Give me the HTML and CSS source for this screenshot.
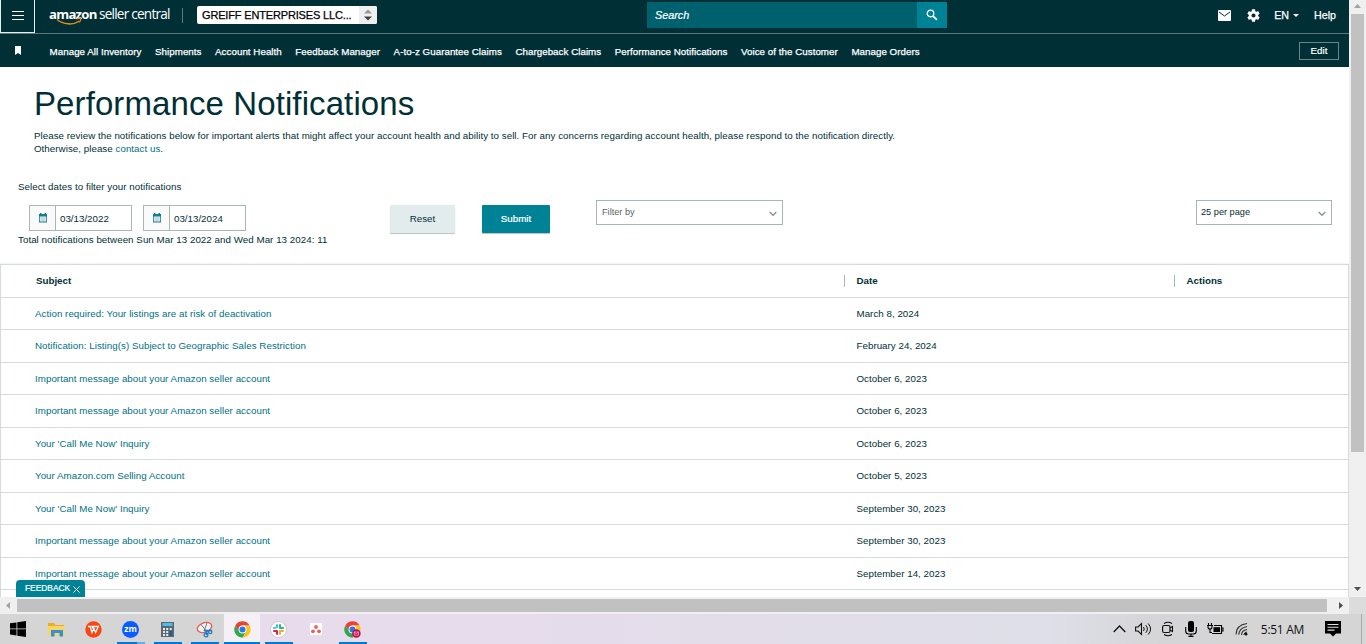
FILE: index.html
```html
<!DOCTYPE html>
<html lang="en">
<head>
<meta charset="utf-8">
<title>Performance Notifications</title>
<link rel="stylesheet" href="styles.css">
</head>
<body>
<div class="screen">
  <div class="browser">
    <div class="page">
      <header class="topbar">
        <div class="burger"><svg width="12" height="11" viewBox="0 0 12 11"><path d="M0 1.500h12M0 5.500h12M0 9.500h12" stroke="#fff" stroke-width="1.100"/></svg></div>
        <div class="brand"><b>amazon</b><span>seller central</span>
          <svg class="smile" width="28" height="8" viewBox="0 0 28 8"><path d="M1 1.500c6 5 16 6 22.500 1.500" fill="none" stroke="#e88b1e" stroke-width="1.500"/><path d="M20.500 1c2-.8 4-.8 4.200-.2.200.8-.5 2.600-1.400 3.700" fill="none" stroke="#e88b1e" stroke-width="1.100"/></svg>
        </div>
        <i class="divider"></i>
        <div class="account"><span>GREIFF ENTERPRISES LLC...</span><i><svg width="8" height="12" viewBox="0 0 8 12"><path d="M0 4.500L4 0.500l4 4z" fill="#999"/><path d="M0 7.500h8l-4 4z" fill="#444"/></svg></i></div>
        <div class="search"><span>Search</span><i><svg width="12" height="12" viewBox="0 0 12 12"><circle cx="4.500" cy="4.500" r="3.300" fill="none" stroke="#fff" stroke-width="1.300"/><path d="M6.900 6.900l4 4" stroke="#fff" stroke-width="1.700"/></svg></i></div>
        <div class="tools">
          <svg class="mail" width="13" height="11" viewBox="0 0 13 11"><rect width="13" height="11" rx="1" fill="#fff"/><path d="M1 2l5.500 4L12 2" fill="none" stroke="#002f36" stroke-width="1"/></svg>
          <svg class="gear" width="13" height="13" viewBox="2 2 20 20"><path fill="#fff" d="M19.140 12.940c.04-.3.060-.61.060-.94 0-.32-.02-.64-.07-.94l2.030-1.580c.18-.14.230-.41.120-.61l-1.920-3.320c-.12-.22-.37-.29-.59-.22l-2.390.96c-.5-.38-1.030-.7-1.620-.94L14.400 2.810c-.04-.24-.24-.41-.48-.41h-3.840c-.24 0-.43.170-.47.410L9.250 5.350c-.59.240-1.130.57-1.620.940l-2.390-.96c-.22-.08-.47 0-.59.220L2.740 8.870c-.12.210-.08.470.120.610l2.030 1.580c-.05.300-.09.630-.09.940s.02.640.070.940l-2.030 1.580c-.18.140-.23.410-.12.610l1.920 3.320c.12.220.37.290.59.220l2.390-.96c.5.380 1.030.7 1.620.940l.36 2.540c.05.240.24.410.48.410h3.840c.24 0 .44-.17.470-.41l.36-2.540c.59-.24 1.130-.56 1.620-.94l2.390.96c.22.080.47 0 .59-.22l1.920-3.320c.12-.22.070-.47-.12-.61zM12 15.200a3.200 3.200 0 110-6.400 3.200 3.200 0 010 6.400z"/></svg>
          <span class="lang">EN</span><svg class="caret" width="6" height="3" viewBox="0 0 6 3"><path d="M0 0h6L3 3z" fill="#fff"/></svg>
          <span>Help</span>
        </div>
      </header>
      <nav class="favorites">
        <svg class="mark" width="6" height="9" viewBox="0 0 6 9"><path d="M0 0h6v9L3 7 0 9z" fill="#fff"/></svg>
        <a>Manage All Inventory</a><a>Shipments</a><a>Account Health</a><a>Feedback Manager</a><a>A-to-z Guarantee Claims</a><a>Chargeback Claims</a><a>Performance Notifications</a><a>Voice of the Customer</a><a>Manage Orders</a>
        <button class="edit">Edit</button>
      </nav>
      <main>
        <h1>Performance Notifications</h1>
        <p class="intro">Please review the notifications below for important alerts that might affect your account health and ability to sell. For any concerns regarding account health, please respond to the notification directly.<br>Otherwise, please <a>contact us</a>.</p>
        <p class="prompt">Select dates to filter your notifications</p>
        <div class="filters">
          <div class="date"><i><svg width="10" height="10" viewBox="0 0 10 10"><path d="M1 1h8v8.500H1zM2 0h1.500v2H2zM6.500 0H8v2H6.500z" fill="#117f92"/><path d="M1.800 3.500h6.400v5H1.800z" fill="#e5edf0"/><path d="M2.500 5h5M2.500 7h5" stroke="#9bb5bd" stroke-width=".7"/></svg></i><span>03/13/2022</span></div>
          <div class="date"><i><svg width="10" height="10" viewBox="0 0 10 10"><path d="M1 1h8v8.500H1zM2 0h1.500v2H2zM6.500 0H8v2H6.500z" fill="#117f92"/><path d="M1.800 3.500h6.400v5H1.800z" fill="#e5edf0"/><path d="M2.500 5h5M2.500 7h5" stroke="#9bb5bd" stroke-width=".7"/></svg></i><span>03/13/2024</span></div>
          <button class="btn reset">Reset</button>
          <button class="btn submit">Submit</button>
          <div class="select by"><span>Filter by</span><svg width="8" height="6" viewBox="0 0 8 6"><path d="M.7 1L4 4.300 7.300 1" fill="none" stroke="#879596" stroke-width="1.500"/></svg></div>
          <div class="select per"><span>25 per page</span><svg width="8" height="6" viewBox="0 0 8 6"><path d="M.7 1L4 4.300 7.300 1" fill="none" stroke="#879596" stroke-width="1.500"/></svg></div>
        </div>
        <p class="total">Total notifications between Sun Mar 13 2022 and Wed Mar 13 2024: 11</p>
        <div class="table">
          <div class="row head"><b>Subject</b><b>Date</b><b>Actions</b></div>
          <div class="row"><a>Action required: Your listings are at risk of deactivation</a><span>March 8, 2024</span></div>
          <div class="row"><a>Notification: Listing(s) Subject to Geographic Sales Restriction</a><span>February 24, 2024</span></div>
          <div class="row"><a>Important message about your Amazon seller account</a><span>October 6, 2023</span></div>
          <div class="row"><a>Important message about your Amazon seller account</a><span>October 6, 2023</span></div>
          <div class="row"><a>Your 'Call Me Now' Inquiry</a><span>October 6, 2023</span></div>
          <div class="row"><a>Your Amazon.com Selling Account</a><span>October 5, 2023</span></div>
          <div class="row"><a>Your 'Call Me Now' Inquiry</a><span>September 30, 2023</span></div>
          <div class="row"><a>Important message about your Amazon seller account</a><span>September 30, 2023</span></div>
          <div class="row"><a>Important message about your Amazon seller account</a><span>September 14, 2023</span></div>
          <div class="row"></div>
        </div>
      </main>
      <div class="feedback"><span>FEEDBACK</span><svg width="7" height="7" viewBox="0 0 7 7"><path d="M.5.5l6 6M6.500.5l-6 6" stroke="#fff"/></svg></div>
    </div>
    <div class="vscroll">
      <svg width="7" height="4" viewBox="0 0 7 4"><path d="M0 4h7L3.500 0z" fill="#a3a3a3"/></svg>
      <i></i>
      <svg width="7" height="4" viewBox="0 0 7 4"><path d="M0 0h7L3.500 4z" fill="#505050"/></svg>
    </div>
    <div class="hscroll">
      <svg width="4" height="7" viewBox="0 0 4 7"><path d="M4 0v7L0 3.500z" fill="#a3a3a3"/></svg>
      <i></i>
      <svg width="4" height="7" viewBox="0 0 4 7"><path d="M0 0v7l4-3.500z" fill="#505050"/></svg>
    </div>
    <div class="corner"></div>
  </div>
  <footer class="taskbar">
    <div class="app start"><svg width="16" height="16" viewBox="0 0 16 16"><path d="M0 2.300l6.500-.9v6.100H0zM7.300 1.300L16 0v7.500H7.300zM0 8.300h6.500v6.200L0 13.600zM7.300 8.300H16V16l-8.700-1.300z" fill="#000"/></svg></div>
    <div class="app"><svg width="17" height="15" viewBox="0 0 17 15"><path d="M0 1h6l1.500 2H16v11H0z" fill="#e9ac25"/><path d="M0 4h16.500v10H0z" fill="#fcd462"/><path d="M3 8h12v6.500h-3.500V11h-5v3.500H3z" fill="#3291dc"/></svg></div>
    <div class="app"><svg width="17" height="17" viewBox="0 0 17 17"><circle cx="8.500" cy="8.500" r="8.200" fill="#fa4615"/><path d="M3 5.500h2.200l1.700 6 2-4 1.700 4 2.700-6H7l1.800 3" fill="none" stroke="#fff" stroke-width="1.300"/></svg></div>
    <div class="app run split"><span class="zoom">zm</span></div>
    <div class="app run"><svg width="13" height="15" viewBox="0 0 13 15"><path d="M0 0h13v15H0z" fill="#5e6770"/><path d="M1.500 1h10v3h-10z" fill="#45c0ed"/><path d="M2 6h2v2H2zM5.200 6h2v2h-2zM2 9h2v2H2zM5.200 9h2v2h-2zM2 12h2v2H2zM5.200 12h2v2h-2zM8.700 6h2v2h-2z" fill="#e5e8ec"/><path d="M8.700 9h2.500v5H8.700z" fill="#175e9a"/></svg></div>
    <div class="app run"><svg width="17" height="17" viewBox="0 0 17 17"><ellipse cx="8.500" cy="6.500" rx="7.500" ry="4.700" transform="rotate(-20 8.500 6.500)" fill="#f4f4f4" stroke="#e45b58" stroke-width="1.300"/><path d="M5 3.500l5 6M11 2L8 10" stroke="#777" stroke-width="1"/><path d="M8 9.500h8M10.500 9v5" stroke="#1a78c8" stroke-width="1.700"/><circle cx="10" cy="14" r="1.900" fill="none" stroke="#1a78c8" stroke-width="1.200"/><circle cx="14.200" cy="11" r="1.700" fill="none" stroke="#1a78c8" stroke-width="1.200"/></svg></div>
    <div class="app run full"><svg width="17" height="17" viewBox="0 0 48 48"><path d="M24 1a23 23 0 00-20 11.500L14 30l10-6V13h20A23 23 0 0024 1z" fill="#ea4335"/><path d="M4 12.500A23 23 0 0024 47l10-17-10-6-10 5.500z" fill="#2da94f"/><path d="M44 13H24l10 17-10 17a23 23 0 0020-34z" fill="#fcc419"/><circle cx="24" cy="24" r="11" fill="#fff"/><circle cx="24" cy="24" r="8.500" fill="#2878f0"/></svg></div>
    <div class="app run"><svg width="17" height="17" viewBox="0 0 17 17"><circle cx="8.500" cy="8.500" r="8" fill="#fff" stroke="#c2bec5" stroke-width=".8"/><g fill="none" stroke-width="2" stroke-linecap="round"><path d="M7 4v2.500M4 7h1" stroke="#36c5f0"/><path d="M10 4v2.500M10 7h3" stroke="#2eb67d"/><path d="M10 10v3M10 10h3" stroke="#ecb22e"/><path d="M4 10h3M7 10v3" stroke="#e01e5a"/></g></svg></div>
    <div class="app"><svg width="12" height="12" viewBox="0 0 12 12"><path d="M0 0h12v12H0z" fill="#fff"/><circle cx="6" cy="4" r="1.900" fill="#e9605f"/><circle cx="3" cy="8.300" r="1.900" fill="#e9605f"/><circle cx="9" cy="8.300" r="1.900" fill="#e9605f"/></svg></div>
    <div class="app run"><svg width="17" height="17" viewBox="0 0 48 48"><path d="M24 1a23 23 0 00-20 11.500L14 30l10-6V13h20A23 23 0 0024 1z" fill="#ea4335"/><path d="M4 12.500A23 23 0 0024 47l10-17-10-6-10 5.500z" fill="#2da94f"/><path d="M44 13H24l10 17-10 17a23 23 0 0020-34z" fill="#fcc419"/><circle cx="24" cy="24" r="11" fill="#fff"/><circle cx="24" cy="24" r="8.500" fill="#2878f0"/><circle cx="35" cy="35" r="12" fill="#b90d58"/><path d="M29 31h12v9H29zM29 31l6 5 6-5" fill="none" stroke="#efb4ce" stroke-width="2"/></svg></div>
    <div class="tray">
      <svg width="13" height="8" viewBox="0 0 13 8"><path d="M.7 7L6.500 1l5.800 6" fill="none" stroke="#111" stroke-width="1.300"/></svg>
      <svg width="17" height="14" viewBox="0 0 17 14"><path d="M.6 5h2.500l3.400-3.500v11L3.100 9H.6z" fill="none" stroke="#111" stroke-width="1.100"/><path d="M8.500 5q1.500 2 0 4M10.800 3.200q3.200 3.800 0 7.600M13.200 1.500q4.800 5.500 0 11" fill="none" stroke="#111"/></svg>
      <svg width="12" height="16" viewBox="0 0 12 16"><rect x=".6" y="4.500" width="7.400" height="7" rx="1.500" fill="none" stroke="#111" stroke-width="1.200"/><path d="M8 7l2.500-1.500v5L8 9M2 2.500q4-2.500 8 0M2 13.500q4 2.500 8 0" fill="none" stroke="#111" stroke-width="1.100"/></svg>
      <svg width="12" height="16" viewBox="0 0 12 16"><rect x="3" y="0" width="6" height="11" rx="2" fill="#000"/><path d="M.7 6v4q0 3 3 3h4.600q3 0 3-3V6M6 13v2.500M3.500 15.400h5" fill="none" stroke="#000" stroke-width="1.100"/></svg>
      <svg width="17" height="13" viewBox="0 0 17 13"><path d="M7 2.500h7.500v8H5M14.500 5H16v3h-1.500M1.500 0v2.500M4.500 0v2.500M0 2.500h6M1 2.500V4q0 2 2 2 2 0 2-2V2.500M3 6v3.500h2" fill="none" stroke="#000" stroke-width="1.100"/><path d="M6.500 4.200h6.500v4.800H6.500z" fill="#000"/></svg>
      <svg width="13" height="14" viewBox="0 0 13 14"><path d="M1 12.500Q1 3 12 1.500M3.800 12.800Q4 6 12 4.500M6.500 13Q6.500 8.500 12 7.500" fill="none" stroke="#333" stroke-width="1.100"/><circle cx="11" cy="12.200" r="1.400" fill="#111"/><path d="M8.800 13q.2-2.500 3.200-3" fill="none" stroke="#222"/></svg>
      <span class="clock">5:51 AM</span>
      <svg width="16" height="16" viewBox="0 0 16 16"><path d="M0 0h16v12.500h-5L8 15.500l-3-3H0z" fill="#000"/><path d="M2.500 3.500h11M2.500 6.300h11M2.500 9.100h7" stroke="#ddd" stroke-width="1.100"/></svg>
      <i class="peek"></i>
    </div>
  </footer>
</div>
</body>
</html>
```
FILE: styles.css
```css
* { box-sizing: border-box; }
body { margin: 0; font-family: "Liberation Sans", Arial, sans-serif; font-size: 9.75px; color: #002f36; }
p, h1 { margin: 0; font-weight: 400; }
i { font-style: normal; }
svg { display: block; flex: none; }
button { font-family: inherit; padding: 0; }
.screen { width: 1366px; height: 644px; overflow: hidden; background: #fff; }
.browser { display: grid; grid-template-columns: 1349px 17px; grid-template-rows: 597px 17px; }
.page { position: relative; overflow: hidden; height: 597px; }

.topbar { height: 34px; display: flex; background: #002f36; border-bottom: 1px solid #5f787b; color: #fff; }
.burger { width: 35px; height: 33px; border: 1px solid #e7eced; border-top: 0; display: flex; align-items: center; justify-content: center; padding-bottom: 2px; }
.brand { position: relative; margin-left: 14px; width: 133px; height: 28px; display: flex; align-items: center; gap: 3px; font: 13.6px/26px "Open Sans", sans-serif; letter-spacing: -.78px; white-space: nowrap; }
.brand b { font-weight: 700; font-size: 13.2px; letter-spacing: -.76px; width: 47px; }
.smile { position: absolute; left: 7px; top: 18px; }
.divider { width: 1px; height: 15px; margin-top: 8px; background: #60797c; }
.account { margin: 6px 0 0 14px; width: 180px; height: 18px; background: #fff; border-radius: 2px; display: flex; justify-content: space-between; overflow: hidden; color: #000; font-size: 11px; line-height: 19px; -webkit-text-stroke: .25px #000; }
.account span { padding-left: 5px; white-space: nowrap; letter-spacing: -.16px; }
.account i { width: 18px; background: #efefef; display: grid; place-items: center; }
.search { margin: 2px 0 0 270px; width: 300px; height: 26px; display: flex; background: #00616e; font-size: 10.8px; font-style: italic; line-height: 27px; -webkit-text-stroke: .2px #fff; }
.search span { flex: 1; padding-left: 8px; }
.search i { width: 30px; background: #008296; display: grid; place-items: center; }
.tools { flex: 1; display: flex; align-items: center; padding: 0 13px 3px 0; justify-content: flex-end; font-size: 10.7px; -webkit-text-stroke: .25px #fff; }
.mail { margin-right: 16px; }
.gear { margin-right: 14px; }
.caret { margin: 1px 15px 0 4px; }

.favorites { height: 33px; display: flex; align-items: center; background: #002f36; color: #fff; padding: 0 10px 0 15px; letter-spacing: .04px; -webkit-text-stroke: .25px #fff; }
.favorites a { margin-right: 13.600px; padding-top: 2px; white-space: nowrap; }
.mark { margin-right: 28.600px; margin-bottom: 1px; }
.edit { margin-left: auto; width: 40px; height: 18px; border: 1px solid #6d8487; background: transparent; color: #fff; font-size: 9.750px; -webkit-text-stroke: .2px #fff; }

h1 { padding: 17px 0 0 34px; height: 62px; font-size: 33px; line-height: 40px; letter-spacing: .1px; }
.intro { padding-left: 34px; line-height: 13px; height: 51px; white-space: nowrap; letter-spacing: .041px; }
a { text-decoration: none; }
.intro a, .row a { color: #007185; }
.row a { letter-spacing: .041px; }
.prompt { padding-left: 18px; line-height: 14px; height: 20px; letter-spacing: .045px; }
.filters { height: 33px; padding: 0 17px 0 29px; display: flex; align-items: flex-start; }
.date { margin: 5px 11px 0 0; width: 103px; height: 26px; border: 1px solid #a6b7b7; display: flex; line-height: 26px; }
.date i { width: 26px; background: #fafafa; border-right: 1px solid #a6b7b7; display: grid; place-items: center; }
.date span { padding-left: 4px; }
.btn { height: 28px; margin-top: 5px; border: 0; border-radius: 1px; padding-bottom: 1px; font-size: 9.750px; box-shadow: 0 1px 1px #b8c0c0; }
.reset { margin-left: 133px; width: 65px; background: #e3eced; color: #002f36; }
.submit { margin-left: 27px; width: 68px; background: #008296; color: #fff; -webkit-text-stroke: .2px #fff; }
.select { height: 25px; border: 1px solid #a6b7b7; display: flex; align-items: center; justify-content: space-between; padding: 0 5px 0 4px; line-height: 22px; }
.select span { padding-bottom: 1px; }
.select svg { margin-top: 2px; }
.by { margin-left: 46px; width: 187px; color: #56676a; font-size: 9.200px; padding-left: 5px; }
.per { margin-left: auto; width: 136px; font-size: 9.200px; }
.total { padding-left: 18px; height: 31px; line-height: 14px; letter-spacing: .045px; }
.table { border: 1px solid #d5dbdb; border-bottom: 0; box-shadow: 0 -1px #f3f5f5; }
.row { height: 32.500px; border-bottom: 1px solid #d5dbdb; display: grid; grid-template-columns: 821.500px 330px 1fr; align-items: center; padding-left: 34px; white-space: nowrap; }
.row span { letter-spacing: .03px; }
.head { height: 32.700px; line-height: 12px; }
.head b:first-child { padding-left: 1px; }
.head b + b { border-left: 1px solid #a6b7b7; margin-left: -13px; padding-left: 12px; }
.feedback { position: absolute; left: 16px; top: 580px; width: 69px; height: 17px; border-radius: 4px 4px 0 0; background: #008296; color: #fff; display: flex; align-items: center; gap: 3px; padding-left: 9px; font-size: 8.400px; -webkit-text-stroke: .2px #fff; }
.feedback span { padding-bottom: 1px; }
.feedback svg { margin-top: 1px; }

.vscroll { background: #f0f0f0; display: flex; flex-direction: column; align-items: center; padding: 4px 0 6px; }
.vscroll i { margin: 6px 0 auto 0; width: 13px; height: 438px; background: #c1c1c1; }
.hscroll { background: #f0f0f0; display: flex; align-items: center; padding: 0 6px; }
.hscroll i { margin: 0 auto 0 7px; width: 1310px; height: 13px; background: #c1c1c1; }
.corner { background: #dcdcdc; }

.taskbar { height: 30px; display: flex; background: linear-gradient(90deg, #d5d5d5 0, #d5d5d6 220px, #e8dcec 262px, #e6dceb 520px, #dedfe8 1050px, #d5d5d7 1160px, #d5d5d5); }
.app { width: 37px; height: 30px; display: flex; flex-direction: column; align-items: center; justify-content: center; position: relative; }
.start { width: 38px; padding-right: 2px; }
.run::after { content: ""; position: absolute; bottom: 0; left: 5px; width: 28px; height: 2px; background: #0078d7; }
.split::after { background: linear-gradient(90deg, #0078d7 20px, #63aee8 20px); }
.full { margin: 0 0 0 1px; width: 36px; background: #f4f0f5; }
.full::after { left: 0; width: 36px; }
.zoom { width: 17px; height: 17px; border-radius: 50%; background: #0b5cff; color: #fff; font: 700 8.500px/15px "Open Sans", sans-serif; text-align: center; }
.tray { margin-left: auto; display: flex; align-items: center; }
.tray svg:nth-of-type(1) { margin-right: 9px; }
.tray svg:nth-of-type(2) { margin-right: 10px; }
.tray svg:nth-of-type(3) { margin-right: 11px; }
.tray svg:nth-of-type(4) { margin-right: 10px; }
.tray svg:nth-of-type(5) { margin-right: 11px; }
.clock { margin: 0 21px 0 13px; font: 12px "Open Sans", sans-serif; color: #111; letter-spacing: -.3px; }
.peek { width: 1px; height: 30px; margin: 0 4px 0 20px; background: #aaa; }
```
